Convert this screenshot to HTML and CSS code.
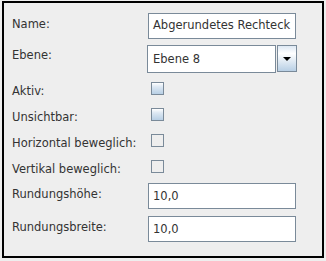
FILE: index.html
```html
<!DOCTYPE html>
<html>
<head>
<meta charset="utf-8">
<link rel="stylesheet" href="styles.css">
</head>
<body>
<div class="panel">
  <div class="row field-row">
    <div class="label">Name:</div>
    <div class="field name-field"><span class="text name-text">Abgerundetes Rechteck</span></div>
  </div>
  <div class="row combo-row">
    <div class="label">Ebene:</div>
    <div class="combo">
      <div class="combo-text"><span class="text">Ebene 8</span></div>
      <div class="combo-btn"><span class="arrow"></span></div>
    </div>
  </div>
  <div class="row check-row">
    <div class="label">Aktiv:</div>
    <div class="check check-on"></div>
  </div>
  <div class="row check-row">
    <div class="label">Unsichtbar:</div>
    <div class="check check-on"></div>
  </div>
  <div class="row check-row">
    <div class="label">Horizontal beweglich:</div>
    <div class="check"></div>
  </div>
  <div class="row check-row">
    <div class="label">Vertikal beweglich:</div>
    <div class="check"></div>
  </div>
  <div class="row field-row">
    <div class="label">Rundungshöhe:</div>
    <div class="field"><span class="text">10,0</span></div>
  </div>
  <div class="row field-row last-row">
    <div class="label">Rundungsbreite:</div>
    <div class="field"><span class="text">10,0</span></div>
  </div>
</div>
</body>
</html>
```
FILE: styles.css
```css
html, body {
  margin: 0;
  padding: 0;
  background: #eeeeee;
}
body {
  font-family: "DejaVu Sans", sans-serif;
  font-size: 11.5px;
  line-height: 14px;
  color: #333333;
}
.panel {
  box-sizing: border-box;
  margin: 1px 0 0 2px;
  width: 322px;
  height: 257px;
  border: 2px solid #000;
  background: #eeeeee;
  padding: 10px 0 0 8px;
  display: flex;
  flex-direction: column;
  gap: 6px;
}
.row {
  display: flex;
  align-items: flex-start;
}
.label {
  width: 136px;
  flex: none;
  white-space: nowrap;
}
.field-row { height: 26px; }
.field-row .label { padding-top: 3.5px; }
.combo-row { height: 28px; }
.combo-row .label { padding-top: 3.3px; }
.check-row { height: 20px; }
.check-row .label { padding-top: 4.8px; }
.last-row { margin-top: 1px; }

.field {
  box-sizing: border-box;
  width: 148px;
  height: 26px;
  background: #fff;
  border: 1px solid #7a8a99;
  padding: 0 4px;
  display: flex;
  align-items: center;
  white-space: nowrap;
  overflow: hidden;
}
.name-field { padding-bottom: 2px; }
.combo {
  display: flex;
  gap: 1px;
  margin-left: -1px;
}
.combo-text {
  box-sizing: border-box;
  width: 129px;
  height: 28px;
  background: #fff;
  border: 1px solid #7a8a99;
  padding: 0 5px;
  display: flex;
  align-items: center;
}
.combo-btn {
  box-sizing: border-box;
  width: 20px;
  height: 27px;
  border: 1px solid #7a8a99;
  background: linear-gradient(#dde8f3 0%, #ffffff 30%, #b8cfe5 100%);
  display: flex;
  align-items: center;
  justify-content: center;
}
.arrow {
  width: 0;
  height: 0;
  border-left: 4px solid transparent;
  border-right: 4px solid transparent;
  border-top: 4px solid #000;
  margin-top: 1px;
}
.check {
  box-sizing: border-box;
  width: 13px;
  height: 13px;
  margin-top: 3px;
  margin-left: 3px;
  border: 1px solid #7a8a99;
  background: #eeeeee;
}
.check-on {
  background: linear-gradient(#ffffff 0%, #dde8f3 35%, #b8cfe5 100%);
}
```
